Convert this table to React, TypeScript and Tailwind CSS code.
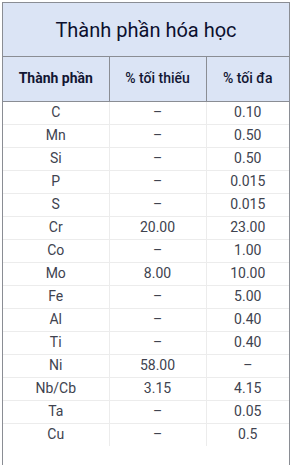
import React from 'react';

const rows: [string, string, string][] = [
  ['C', '–', '0.10'],
  ['Mn', '–', '0.50'],
  ['Si', '–', '0.50'],
  ['P', '–', '0.015'],
  ['S', '–', '0.015'],
  ['Cr', '20.00', '23.00'],
  ['Co', '–', '1.00'],
  ['Mo', '8.00', '10.00'],
  ['Fe', '–', '5.00'],
  ['Al', '–', '0.40'],
  ['Ti', '–', '0.40'],
  ['Ni', '58.00', '–'],
  ['Nb/Cb', '3.15', '4.15'],
  ['Ta', '–', '0.05'],
  ['Cu', '–', '0.5'],
];

export default function App() {
  return (
    <div className="bg-white pl-[2px] pt-[2px] w-[291px] h-[465px] overflow-hidden" style={{ fontFamily: 'Roboto, "Noto Sans", sans-serif' }}>
      <div className="w-[288px] h-[480px] border border-[#8a8d94]">
        <table className="w-full border-collapse table-fixed">
          <colgroup>
            <col className="w-[106px]" />
            <col className="w-[97px]" />
            <col />
          </colgroup>
          <thead>
            <tr className="bg-[#dbe4f5] h-[53px]">
              <th colSpan={3} className="text-[20px] font-normal text-[#0b0f2e] border-b border-[#8a8d94] pt-[1px]">
                Thành phần hóa học
              </th>
            </tr>
            <tr className="bg-[#dbe4f5] h-[45px]">
              <th className="text-[14px] font-bold text-[#121633] border-r border-b border-[#8a8d94]">Thành phần</th>
              <th className="text-[14px] font-medium text-[#121633] border-r border-b border-[#8a8d94]">% tối thiếu</th>
              <th className="text-[14px] font-medium text-[#121633] border-b border-[#8a8d94]">% tối đa</th>
            </tr>
          </thead>
          <tbody>
            {rows.map(([el, min, max], i) => (
              <tr key={el} className={`h-[23px] ${i < rows.length - 1 ? 'border-b border-[#ececec]' : ''}`}>
                <td className="text-center text-[14px] text-[#40434f] border-r border-[#ececec] p-0">{el}</td>
                <td className="text-center text-[14px] text-[#40434f] border-r border-[#ececec] p-0">{min}</td>
                <td className="text-center text-[14px] text-[#40434f] p-0">{max}</td>
              </tr>
            ))}
          </tbody>
        </table>
      </div>
    </div>
  );
}
